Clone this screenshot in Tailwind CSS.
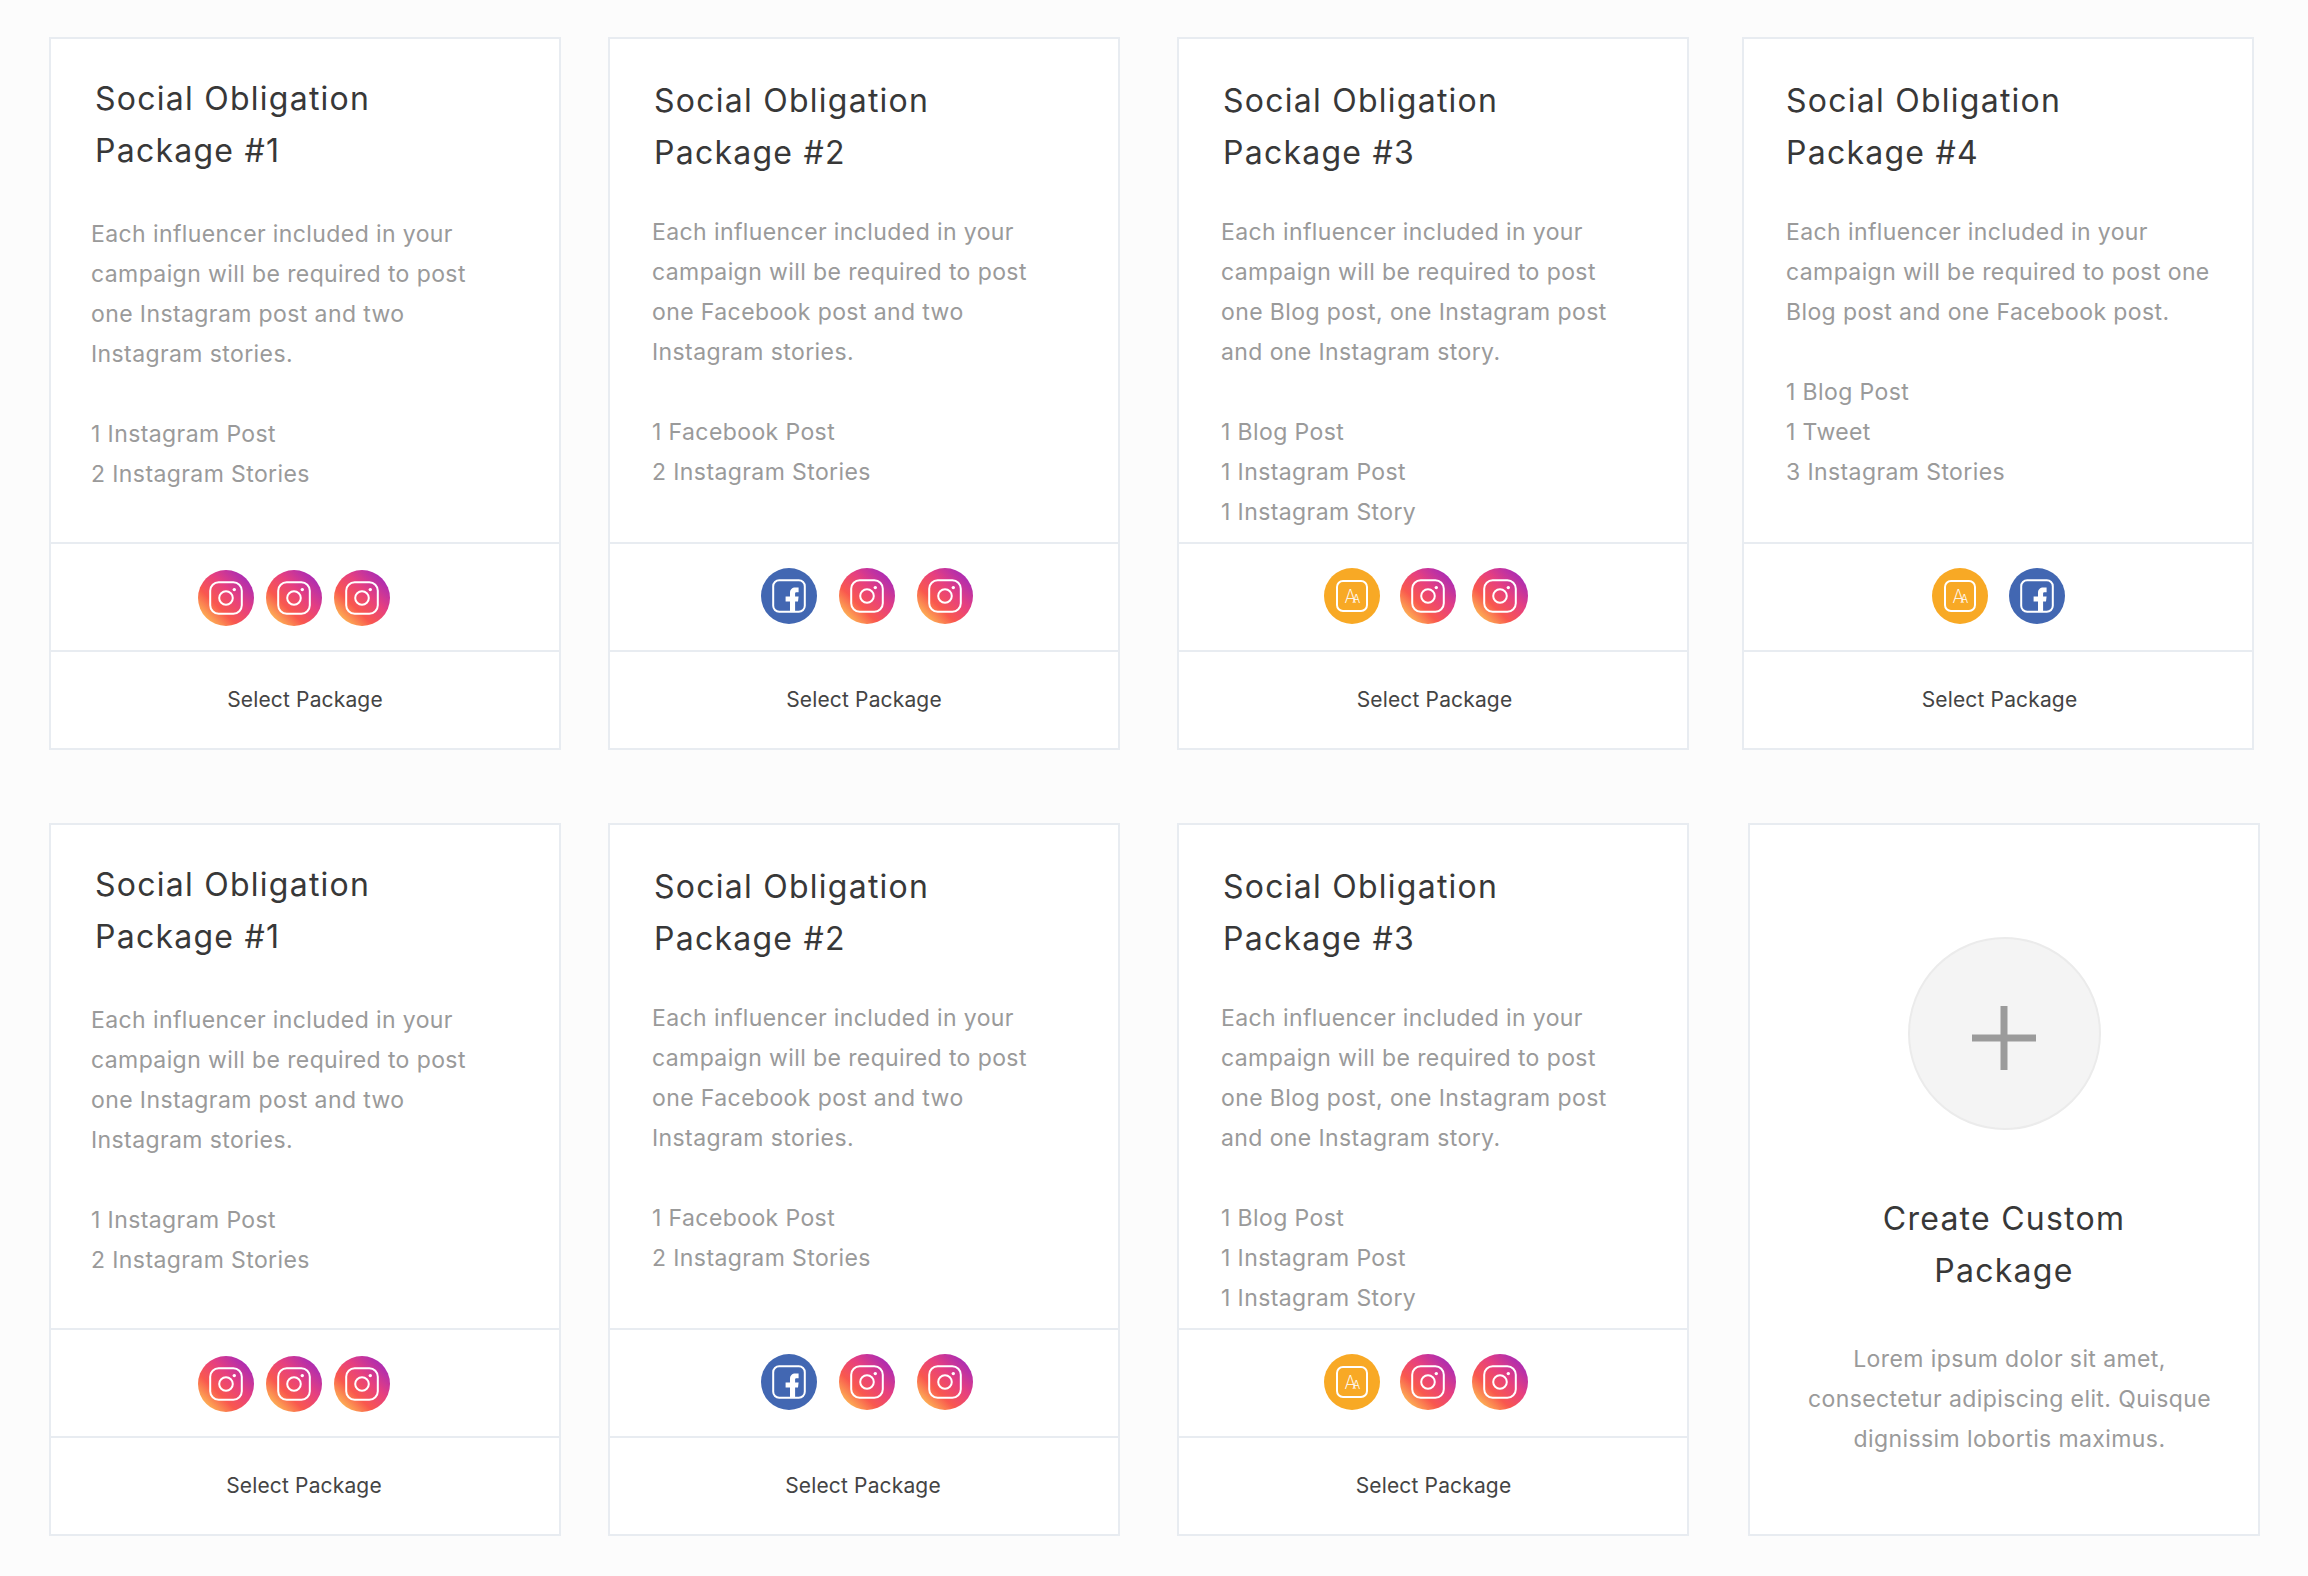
<!DOCTYPE html>
<html lang="en">
  <head>
    <meta charset="UTF-8" />
    <title>Packages</title>
    <script src="https://cdn.jsdelivr.net/npm/@tailwindcss/browser@4"></script>
  </head>
  <body class="bg-[#fcfcfc] font-['Inter',sans-serif] w-[2308px] h-[1576px] overflow-hidden">
    <!-- shared icons -->
    <svg class="absolute w-0 h-0" width="0" height="0">
      <defs>
        <linearGradient id="ig" gradientUnits="userSpaceOnUse" x1="7" y1="50" x2="50" y2="6">
          <stop offset="0" stop-color="#fdb855" />
          <stop offset="0.3" stop-color="#f9584e" />
          <stop offset="0.62" stop-color="#e63f80" />
          <stop offset="1" stop-color="#a62ab8" />
        </linearGradient>
        <symbol id="instagram" viewBox="0 0 56 56">
          <circle cx="28" cy="28" r="28" fill="url(#ig)" />
          <rect x="12.2" y="12.2" width="31.6" height="31.6" rx="8.5" fill="none" stroke="#fff" stroke-width="2" />
          <circle cx="28" cy="28" r="6.8" fill="none" stroke="#fff" stroke-width="2" />
          <circle cx="36.3" cy="19.6" r="1.7" fill="#fff" />
        </symbol>
        <symbol id="facebook" viewBox="0 0 56 56">
          <circle cx="28" cy="28" r="28" fill="#4267b2" />
          <rect x="12.2" y="12.2" width="31.6" height="31.6" rx="6" fill="none" stroke="#fff" stroke-width="2" />
          <path d="M29 44V33.6h-4.4v-5H29V25c0-3.600 2.100-5.500 5.300-5.500h3.300v4.700h-2.200c-1 0-1.300.5-1.300 1.500v2.900h3.500l-.6 5h-2.900V44z" fill="#fff" />
        </symbol>
        <symbol id="blog" viewBox="0 0 56 56">
          <circle cx="28" cy="28" r="28" fill="#f8a925" />
          <rect x="13" y="13" width="30" height="30" rx="6" fill="none" stroke="#fff" stroke-width="2" />
          <text x="20.500" y="35" font-family="Inter" font-weight="200" font-size="18" fill="#fff">A</text>
          <text x="28.500" y="35" font-family="Inter" font-weight="300" font-size="11.500" fill="#fff">A</text>
        </symbol>
      </defs>
    </svg>

    <!-- Row 1 -->
    <div class="flex pt-[37px] pl-[49px]">
      <div class="w-[512px] h-[713px] flex flex-col bg-white border-2 border-[#e8ecf1]">
        <div class="h-[503px] pt-[34px] pl-[44px]">
          <h3 class="text-[32px] leading-[52px] tracking-[1.25px] text-[#383838]">Social Obligation<br />Package #1</h3>
          <p class="mt-[37px] ml-[-4px] text-[23px] leading-[40px] tracking-[0.4px] text-[#9a9a9a]">Each influencer included in your<br />campaign will be required to post<br />one Instagram post and two<br />Instagram stories.<br /><br />1 Instagram Post<br />2 Instagram Stories</p>
        </div>
        <div class="h-[108px] border-t-2 border-[#e8ecf1] flex items-center gap-[12px] pt-[2px] pl-[147px]">
          <svg class="w-[56px] h-[56px]"><use href="#instagram" /></svg>
          <svg class="w-[56px] h-[56px]"><use href="#instagram" /></svg>
          <svg class="w-[56px] h-[56px]"><use href="#instagram" /></svg>
        </div>
        <div class="flex-1 border-t-2 border-[#e8ecf1] flex justify-center items-center text-[21px] tracking-[0.15px] text-[#444]">Select Package</div>
      </div>

      <div class="w-[512px] h-[713px] ml-[47px] flex flex-col bg-white border-2 border-[#e8ecf1]">
        <div class="h-[503px] pt-[36px] pl-[44px]">
          <h3 class="text-[32px] leading-[52px] tracking-[1.25px] text-[#383838]">Social Obligation<br />Package #2</h3>
          <p class="mt-[33px] ml-[-2px] text-[23px] leading-[40px] tracking-[0.4px] text-[#9a9a9a]">Each influencer included in your<br />campaign will be required to post<br />one Facebook post and two<br />Instagram stories.<br /><br />1 Facebook Post<br />2 Instagram Stories</p>
        </div>
        <div class="h-[108px] border-t-2 border-[#e8ecf1] flex items-center gap-[22px] pb-[2px] pl-[151px]">
          <svg class="w-[56px] h-[56px]"><use href="#facebook" /></svg>
          <svg class="w-[56px] h-[56px]"><use href="#instagram" /></svg>
          <svg class="w-[56px] h-[56px]"><use href="#instagram" /></svg>
        </div>
        <div class="flex-1 border-t-2 border-[#e8ecf1] flex justify-center items-center text-[21px] tracking-[0.15px] text-[#444]">Select Package</div>
      </div>

      <div class="w-[512px] h-[713px] ml-[57px] flex flex-col bg-white border-2 border-[#e8ecf1]">
        <div class="h-[503px] pt-[36px] pl-[44px]">
          <h3 class="text-[32px] leading-[52px] tracking-[1.25px] text-[#383838]">Social Obligation<br />Package #3</h3>
          <p class="mt-[33px] ml-[-2px] text-[23px] leading-[40px] tracking-[0.4px] text-[#9a9a9a]">Each influencer included in your<br />campaign will be required to post<br />one Blog post, one Instagram post<br />and one Instagram story.<br /><br />1 Blog Post<br />1 Instagram Post<br />1 Instagram Story</p>
        </div>
        <div class="h-[108px] border-t-2 border-[#e8ecf1] flex items-center pb-[2px] pl-[145px]">
          <svg class="w-[56px] h-[56px]"><use href="#blog" /></svg>
          <svg class="w-[56px] h-[56px] ml-[20px]"><use href="#instagram" /></svg>
          <svg class="w-[56px] h-[56px] ml-[16px]"><use href="#instagram" /></svg>
        </div>
        <div class="flex-1 border-t-2 border-[#e8ecf1] flex justify-center items-center text-[21px] tracking-[0.15px] text-[#444] pl-[3px]">Select Package</div>
      </div>

      <div class="w-[512px] h-[713px] ml-[53px] flex flex-col bg-white border-2 border-[#e8ecf1]">
        <div class="h-[503px] pt-[36px] pl-[42px]">
          <h3 class="text-[32px] leading-[52px] tracking-[1.25px] text-[#383838]">Social Obligation<br />Package #4</h3>
          <p class="mt-[33px] text-[23px] leading-[40px] tracking-[0.4px] text-[#9a9a9a]">Each influencer included in your<br />campaign will be required to post one<br />Blog post and one Facebook post.</p>
          <p class="mt-[40px] text-[23px] leading-[40px] tracking-[0.4px] text-[#9a9a9a]">1 Blog Post<br />1 Tweet<br />3 Instagram Stories</p>
        </div>
        <div class="h-[108px] border-t-2 border-[#e8ecf1] flex items-center gap-[21px] pb-[2px] pl-[188px]">
          <svg class="w-[56px] h-[56px]"><use href="#blog" /></svg>
          <svg class="w-[56px] h-[56px]"><use href="#facebook" /></svg>
        </div>
        <div class="flex-1 border-t-2 border-[#e8ecf1] flex justify-center items-center text-[21px] tracking-[0.15px] text-[#444] pl-[3px]">Select Package</div>
      </div>
    </div>

    <!-- Row 2 -->
    <div class="flex pt-[73px] pl-[49px]">
      <div class="w-[512px] h-[713px] flex flex-col bg-white border-2 border-[#e8ecf1]">
        <div class="h-[503px] pt-[34px] pl-[44px]">
          <h3 class="text-[32px] leading-[52px] tracking-[1.25px] text-[#383838]">Social Obligation<br />Package #1</h3>
          <p class="mt-[37px] ml-[-4px] text-[23px] leading-[40px] tracking-[0.4px] text-[#9a9a9a]">Each influencer included in your<br />campaign will be required to post<br />one Instagram post and two<br />Instagram stories.<br /><br />1 Instagram Post<br />2 Instagram Stories</p>
        </div>
        <div class="h-[108px] border-t-2 border-[#e8ecf1] flex items-center gap-[12px] pt-[2px] pl-[147px]">
          <svg class="w-[56px] h-[56px]"><use href="#instagram" /></svg>
          <svg class="w-[56px] h-[56px]"><use href="#instagram" /></svg>
          <svg class="w-[56px] h-[56px]"><use href="#instagram" /></svg>
        </div>
        <div class="flex-1 border-t-2 border-[#e8ecf1] flex justify-center items-center text-[21px] tracking-[0.15px] text-[#444] pr-[2px]">Select Package</div>
      </div>

      <div class="w-[512px] h-[713px] ml-[47px] flex flex-col bg-white border-2 border-[#e8ecf1]">
        <div class="h-[503px] pt-[36px] pl-[44px]">
          <h3 class="text-[32px] leading-[52px] tracking-[1.25px] text-[#383838]">Social Obligation<br />Package #2</h3>
          <p class="mt-[33px] ml-[-2px] text-[23px] leading-[40px] tracking-[0.4px] text-[#9a9a9a]">Each influencer included in your<br />campaign will be required to post<br />one Facebook post and two<br />Instagram stories.<br /><br />1 Facebook Post<br />2 Instagram Stories</p>
        </div>
        <div class="h-[108px] border-t-2 border-[#e8ecf1] flex items-center gap-[22px] pb-[2px] pl-[151px]">
          <svg class="w-[56px] h-[56px]"><use href="#facebook" /></svg>
          <svg class="w-[56px] h-[56px]"><use href="#instagram" /></svg>
          <svg class="w-[56px] h-[56px]"><use href="#instagram" /></svg>
        </div>
        <div class="flex-1 border-t-2 border-[#e8ecf1] flex justify-center items-center text-[21px] tracking-[0.15px] text-[#444] pr-[2px]">Select Package</div>
      </div>

      <div class="w-[512px] h-[713px] ml-[57px] flex flex-col bg-white border-2 border-[#e8ecf1]">
        <div class="h-[503px] pt-[36px] pl-[44px]">
          <h3 class="text-[32px] leading-[52px] tracking-[1.25px] text-[#383838]">Social Obligation<br />Package #3</h3>
          <p class="mt-[33px] ml-[-2px] text-[23px] leading-[40px] tracking-[0.4px] text-[#9a9a9a]">Each influencer included in your<br />campaign will be required to post<br />one Blog post, one Instagram post<br />and one Instagram story.<br /><br />1 Blog Post<br />1 Instagram Post<br />1 Instagram Story</p>
        </div>
        <div class="h-[108px] border-t-2 border-[#e8ecf1] flex items-center pb-[2px] pl-[145px]">
          <svg class="w-[56px] h-[56px]"><use href="#blog" /></svg>
          <svg class="w-[56px] h-[56px] ml-[20px]"><use href="#instagram" /></svg>
          <svg class="w-[56px] h-[56px] ml-[16px]"><use href="#instagram" /></svg>
        </div>
        <div class="flex-1 border-t-2 border-[#e8ecf1] flex justify-center items-center text-[21px] tracking-[0.15px] text-[#444] pl-[1px]">Select Package</div>
      </div>

      <!-- Create custom -->
      <div class="w-[512px] h-[713px] ml-[59px] flex flex-col items-center bg-white border-2 border-[#e8ecf1] pt-[112px] text-center">
        <div class="w-[193px] h-[193px] rounded-full bg-[#f4f4f4] border-2 border-[#ebebeb] flex items-center justify-center">
          <svg class="w-[64px] h-[64px] mt-[8px]" viewBox="0 0 64 64"><path d="M0 32h64M32 0v64" stroke="#9b9b9b" stroke-width="7" /></svg>
        </div>
        <h3 class="mt-[63px] text-[32px] leading-[52px] tracking-[1.25px] text-[#383838]">Create Custom<br />Package</h3>
        <p class="mt-[42px] pl-[11px] text-[23px] leading-[40px] tracking-[0.4px] text-[#9a9a9a]">Lorem ipsum dolor sit amet,<br />consectetur adipiscing elit. Quisque<br />dignissim lobortis maximus.</p>
      </div>
    </div>
  </body>
</html>
